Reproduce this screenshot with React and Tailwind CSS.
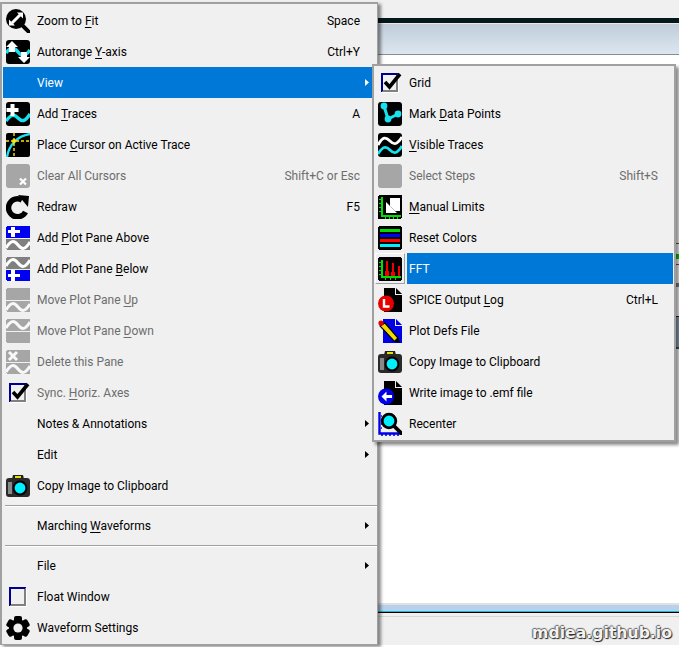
import React from "react";

const ui = { fontFamily: 'Roboto, "Open Sans", sans-serif' };

// Shared pieces for the toolbar-style icons
const Ico = ({ children }) => (
  <svg viewBox="0 0 24 24" width="24" height="24" shapeRendering="crispEdges">
    {children}
  </svg>
);
const Smooth = ({ children }) => (
  <svg viewBox="0 0 24 24" width="24" height="24">
    {children}
  </svg>
);
const Wave = ({ y = 12, color = "#fff", w = 3 }) => (
  <path d={`M0 ${y + 3}C5 ${y - 5} 8 ${y - 5} 12 ${y}S19 ${y + 5} 24 ${y - 3}`} fill="none" stroke={color} strokeWidth={w} />
);
const TOP = "M1 0h22l1 1v11H0V1z";
const BOTTOM = "M0 13h24v10l-1 1H1l-1-1z";

const ZoomFit = () => (
  <Smooth>
    <path d="M15 15l8 8" stroke="#000" strokeWidth="4" strokeLinecap="round" />
    <circle cx="10" cy="10" r="10" fill="#000" />
    <path d="M11 3.5h6v6zM9 16.500H3v-6z" fill="#fff" />
    <path d="M6 14l8-8" stroke="#fff" strokeWidth="3" />
  </Smooth>
);
const Autorange = () => (
  <Smooth>
    <rect width="24" height="24" rx="3" fill="#000" />
    <path d="M0 13C5 6 8 7 12 12S19 17 24 10" fill="none" stroke="#19e0ee" strokeWidth="3.4" />
    <path d="M6 1l6 6H9v5H3V7H0zM18 23l6-6h-3v-5h-6v5h-3z" fill="#fff" />
  </Smooth>
);
const AddTraces = () => (
  <Smooth>
    <rect width="24" height="24" rx="3" fill="#000" />
    <path d="M0 19C5 12 8 12 12 16S19 20 24 12" fill="none" stroke="#19e0ee" strokeWidth="3.4" />
    <path d="M4.500 2h4v4h4v4h-4v4h-4v-4h-4V6h4z" fill="#fff" />
  </Smooth>
);
const PlaceCursor = () => (
  <Smooth>
    <rect width="24" height="24" rx="2" fill="#000" />
    <path d="M1 24C3 12 11 3 24 1" fill="none" stroke="#19e0ee" strokeWidth="2.4" />
    <path d="M8 0v24M0 8h24" stroke="#ffe400" strokeWidth="1.4" strokeDasharray="3 2" />
    <circle cx="8" cy="8" r="2" fill="#ffe400" />
  </Smooth>
);
const ClearCursors = () => (
  <Smooth>
    <rect width="24" height="24" rx="3" fill="#a6a6a6" />
    <path d="M14 14.5l6 6M20 14.5l-6 6" stroke="#fff" strokeWidth="2.2" />
  </Smooth>
);
const Redraw = () => (
  <Smooth>
    <path d="M19.500 17A9 9 0 1 1 16 5" fill="none" stroke="#000" strokeWidth="5.500" />
    <path d="M12 0l11 1-1 11z" fill="#000" />
  </Smooth>
);
const PaneAbove = () => (
  <Ico>
    <path d={TOP} fill="#0000f0" />
    <path d="M5 1h4v3h5v3H9v4H5V7H2V4h3z" fill="#fff" />
    <path d={BOTTOM} fill="#808080" />
    <g shapeRendering="auto"><Wave y={19} /></g>
  </Ico>
);
const PaneBelow = () => (
  <Ico>
    <path d={TOP} fill="#808080" />
    <g shapeRendering="auto"><Wave y={6} /></g>
    <path d={BOTTOM} fill="#0000f0" />
    <path d="M5 13h4v4h5v3H9v4H5v-4H2v-3h3z" fill="#fff" />
  </Ico>
);
const MoveUp = () => (
  <Ico>
    <path d={TOP} fill="#a6a6a6" />
    <path d={BOTTOM} fill="#a6a6a6" />
    <g shapeRendering="auto"><Wave y={19} color="#f8f8f8" /></g>
  </Ico>
);
const MoveDown = () => (
  <Ico>
    <path d={TOP} fill="#a6a6a6" />
    <g shapeRendering="auto"><Wave y={6} color="#f8f8f8" /></g>
    <path d={BOTTOM} fill="#a6a6a6" />
  </Ico>
);
const DeletePane = () => (
  <Ico>
    <path d={TOP} fill="#a6a6a6" />
    <g shapeRendering="auto"><path d="M3 2l8 8M11 2l-8 8" stroke="#f8f8f8" strokeWidth="3" /></g>
    <path d={BOTTOM} fill="#a6a6a6" />
    <g shapeRendering="auto"><Wave y={19} color="#f8f8f8" /></g>
  </Ico>
);
const CheckBox = ({ checked }) => (
  <Ico>
    <rect x="3" y="3" width="17" height="18" fill="#f0f0f0" />
    <path d="M3 2h17v2H5v15l-2 2z" fill="#000090" />
    <path d="M3 21l2-2h13V4l2-2v19z" fill="#808080" />
    <rect x="3" y="21" width="18" height="1" fill="#fff" />
    <rect x="20" y="3" width="1" height="19" fill="#fff" />
    {checked && (
      <g shapeRendering="auto">
        <path d="M7 11l4.500 5L22 3" fill="none" stroke="#000" strokeWidth="3.6" />
      </g>
    )}
  </Ico>
);
const Camera = () => (
  <Smooth>
    <path d="M7 1h10l1 4H6z" fill="#222" />
    <rect x="9" y="2" width="6" height="2" fill="#e8e000" />
    <rect y="4" width="24" height="19" rx="3" fill="#2a2a2a" />
    <path d="M2 8h4v12H2z" fill="#888" />
    <circle cx="14" cy="14" r="7.4" fill="#000" />
    <circle cx="14" cy="14" r="5.4" fill="#00f0ff" />
  </Smooth>
);
const Gear = () => (
  <Smooth>
    <g fill="#000">
      <circle cx="12" cy="12" r="9" />
      <rect x="8" y="0" width="8" height="24" rx="2" />
      <rect x="8" y="0" width="8" height="24" rx="2" transform="rotate(60 12 12)" />
      <rect x="8" y="0" width="8" height="24" rx="2" transform="rotate(120 12 12)" />
    </g>
    <circle cx="12" cy="12" r="4.6" fill="#f0f0f0" />
  </Smooth>
);
const MarkData = () => (
  <Smooth>
    <rect width="24" height="24" rx="3" fill="#000" />
    <path d="M6 4l4 13 10-5" fill="none" stroke="#19e0ee" strokeWidth="3" />
    <circle cx="6" cy="4" r="3.400" fill="#19e0ee" />
    <circle cx="10" cy="17" r="3.400" fill="#19e0ee" />
    <circle cx="20" cy="12" r="3.400" fill="#19e0ee" />
  </Smooth>
);
const VisibleTraces = () => (
  <Smooth>
    <rect width="24" height="24" rx="3" fill="#000" />
    <path d="M0 12C5 3 8 4 12 8S19 12 24 4" fill="none" stroke="#fff" strokeWidth="2.8" />
    <path d="M0 21C5 13 8 13 12 17S19 21 24 13" fill="none" stroke="#19e0ee" strokeWidth="2.8" />
  </Smooth>
);
const SelectSteps = () => (
  <Smooth>
    <rect width="24" height="24" rx="3" fill="#a6a6a6" />
  </Smooth>
);
const ManualLimits = () => (
  <Ico>
    <rect width="24" height="24" rx="2" fill="#000" />
    <path d="M3 2h2v18h18v2H3z" fill="#00e000" />
    <path d="M1 4h2v1H1zM1 8h2v1H1zM1 12h2v1H1zM1 16h2v1H1zM7 22h1v2H7zM11 22h1v2h-1zM15 22h1v2h-1zM19 22h1v2h-1z" fill="#00e000" />
    <g shapeRendering="auto">
      <path d="M12 3h10v13h-5l-5-5z" fill="#fff" />
      <path d="M8 7v11h11z" fill="#fff" />
    </g>
  </Ico>
);
const ResetColors = () => (
  <Ico>
    <rect width="24" height="24" rx="3" fill="#000" />
    <rect x="2" y="3" width="20" height="3" fill="#00e000" />
    <rect x="2" y="8" width="20" height="3" fill="#0000ff" />
    <rect x="2" y="13" width="20" height="3" fill="#ff0000" />
    <rect x="2" y="18" width="20" height="3" fill="#00f0ff" />
  </Ico>
);
const Fft = () => (
  <Ico>
    <rect width="24" height="24" rx="3" fill="#000" />
    <path d="M3 3h2v16h18v2H3zM1 5h2v1H1zM1 9h2v1H1zM1 13h2v1H1zM1 17h2v1H1zM7 21h1v2H7zM12 21h1v2h-1zM17 21h1v2h-1z" fill="#00e000" />
    <path d="M8 4h2v15H8zM14 6h2v13h-2zM20 9h2v10h-2zM7 14h4v5H7zM13 15h4v4h-4z" fill="#f00000" />
  </Ico>
);
const Doc = ({ color }) => <path d="M6 0h11v7h7v17H6z" fill={color} />;
const Fold = ({ color }) => <path d="M18 0l6 6h-6z" fill={color} />;
const SpiceLog = () => (
  <Smooth>
    <Doc color="#000" />
    <Fold color="#000" />
    <circle cx="8" cy="15.500" r="8" fill="#e80000" />
    <path d="M6 11v7.500H11.500" fill="none" stroke="#fff" strokeWidth="2.4" />
  </Smooth>
);
const PlotDefs = () => (
  <Smooth>
    <path d="M5 0h12v7h7v17H5z" fill="#0000e8" />
    <Fold color="#0000e8" />
    <path d="M2 7l5-3 13 15 1 4-5-1z" fill="#f0d800" stroke="#000" strokeWidth="1.2" />
    <circle cx="3" cy="4" r="2.600" fill="#e80000" />
    <path d="M16 22l5 1-1-5z" fill="#000" />
  </Smooth>
);
const WriteEmf = () => (
  <Smooth>
    <Doc color="#000" />
    <Fold color="#000" />
    <circle cx="8" cy="15.500" r="8" fill="#0000e8" />
    <path d="M8.500 10.500l-5 5 5 5zM8.500 14H14v3H8.500z" fill="#fff" />
  </Smooth>
);
const Recenter = () => (
  <Smooth>
    <path d="M1.500 0v21.500H24" fill="none" stroke="#0000e8" strokeWidth="2.400" />
    <path d="M4 24v-2M8 24v-2M12 24v-2M16 24v-2M20 24v-2M3 4h1M3 8h1M3 12h1M3 16h1" stroke="#0000e8" strokeWidth="1.600" />
    <path d="M16 14l7 7" stroke="#000" strokeWidth="3.800" strokeLinecap="round" />
    <circle cx="11" cy="9" r="6.800" fill="#00f0ff" stroke="#000" strokeWidth="2.800" />
  </Smooth>
);

const mainItems = [
  { icon: ZoomFit, text: ["Zoom to ", "F", "it"], key: "Space" },
  { icon: Autorange, text: ["Autorange ", "Y", "-axis"], key: "Ctrl+Y" },
  { text: ["View"], sub: true, active: true },
  { icon: AddTraces, text: ["Add ", "T", "races"], key: "A" },
  { icon: PlaceCursor, text: ["Place ", "C", "ursor on Active Trace"] },
  { icon: ClearCursors, text: ["Clear All Cursors"], key: "Shift+C or Esc", off: true },
  { icon: Redraw, text: ["Redraw"], key: "F5" },
  { icon: PaneAbove, text: ["Add ", "P", "lot Pane Above"] },
  { icon: PaneBelow, text: ["Add Plot Pane ", "B", "elow"] },
  { icon: MoveUp, text: ["Move Plot Pane ", "U", "p"], off: true },
  { icon: MoveDown, text: ["Move Plot Pane ", "D", "own"], off: true },
  { icon: DeletePane, text: ["Delete this Pane"], off: true },
  { icon: () => <CheckBox checked />, text: ["Sync. ", "H", "oriz. Axes"], off: true },
  { text: ["Notes & Annotations"], sub: true },
  { text: ["Edit"], sub: true },
  { icon: Camera, text: ["Copy Image to Clipboard"] },
  { sep: true },
  { text: ["Marching ", "W", "aveforms"], sub: true },
  { sep: true },
  { text: ["File"], sub: true },
  { icon: () => <CheckBox />, text: ["Float Window"] },
  { icon: Gear, text: ["Waveform Settings"] },
];

const viewItems = [
  { icon: () => <CheckBox checked />, text: ["Grid"] },
  { icon: MarkData, text: ["Mark ", "D", "ata Points"] },
  { icon: VisibleTraces, text: ["", "V", "isible Traces"] },
  { icon: SelectSteps, text: ["Select Steps"], key: "Shift+S", off: true },
  { icon: ManualLimits, text: ["", "M", "anual Limits"] },
  { icon: ResetColors, text: ["Reset Colors"] },
  { icon: Fft, text: ["FFT"], active: true, framed: true },
  { icon: SpiceLog, text: ["SPICE Output ", "L", "og"], key: "Ctrl+L" },
  { icon: PlotDefs, text: ["Plot Defs File"] },
  { icon: Camera, text: ["Copy Image to Clipboard"] },
  { icon: WriteEmf, text: ["Write image to .emf file"] },
  { icon: Recenter, text: ["Recenter"] },
];

const Label = ({ text }) => (
  <span className="whitespace-pre">
    {text[0]}
    {text[1] && <u className="underline-offset-2">{text[1]}</u>}
    {text[2]}
  </span>
);

const MainRow = ({ item }) => {
  if (item.sep) {
    return (
      <div className="h-[9px] flex flex-col justify-center pl-[2px]">
        <div className="h-[1px] bg-[#a0a0a0]" />
        <div className="h-[1px] bg-white" />
      </div>
    );
  }
  const Icon = item.icon;
  return (
    <div className={`h-[31px] flex items-center ${item.active ? "bg-[#0078d7] text-white" : item.off ? "text-[#6d6d6d]" : "text-black"}`}>
      <div className="w-[30px] flex justify-center shrink-0">{Icon && <Icon />}</div>
      <div className="pl-[4px] flex-1">
        <Label text={item.text} />
      </div>
      <div className="pr-[5px]">{item.key}</div>
      <div className={`w-[4px] h-[7px] mr-[8px] ${item.sub ? (item.active ? "bg-white" : "bg-black") : ""} [clip-path:polygon(0_0,100%_50%,0_100%)]`} />
    </div>
  );
};

const ViewRow = ({ item }) => {
  const Icon = item.icon;
  return (
    <div className={`h-[31px] flex items-center ${item.off ? "text-[#6d6d6d]" : "text-black"}`}>
      <div className={`w-[30px] h-[31px] flex items-center justify-center shrink-0 ${item.framed ? "border border-t-white border-l-white border-r-[#a0a0a0] border-b-[#a0a0a0]" : ""}`}>
        <Icon />
      </div>
      <div className={`h-[31px] flex items-center flex-1 ml-[2px] ${item.active ? "bg-[#0078d7] text-white" : ""}`}>
        <div className="pl-[2px] flex-1">
          <Label text={item.text} />
        </div>
        <div className="pr-[15px]">{item.key}</div>
      </div>
    </div>
  );
};

export default function App() {
  return (
    <div className="relative w-[679px] h-[647px] overflow-hidden bg-white text-[12px] leading-none" style={ui}>
      {/* window behind the menus */}
      <div className="h-[645px] flex flex-col">
        <div className="h-[18px] bg-[#f0f0f0]" />
        <div className="h-[5px] bg-[#04181c]" />
        <div className="h-[1px] bg-[#e8e8e8]" />
        <div className="h-[30px] bg-gradient-to-b from-[#bfcdd9] to-[#dce6f0]" />
        <div className="h-[1px] bg-[#8c8c8c]" />
        <div className="flex-1 bg-white" />
        <div className="h-[2px] bg-[#e0e0e0]" />
        <div className="h-[6px] bg-[#b8d0ea]" />
        <div className="h-[1px] bg-[#19b8d8]" />
        <div className="h-[1px] bg-black" />
        <div className="h-[3px] bg-[#f0f0f0]" />
        <div className="h-[1px] bg-[#d8d8d8]" />
        <div className="h-[28px] bg-[#f0f0f0] flex items-center justify-end pr-[7px] pt-[3px]">
          <span
            className="text-[15.7px] font-bold text-[#f2f2f2] [text-shadow:1px_1px_1px_#222,-1px_0_1px_#666,0_-1px_1px_#666]"
            style={{ fontFamily: '"DejaVu Sans", sans-serif' }}
          >
            mdiea.github.io
          </span>
        </div>
      </div>

      {/* bits of the plot peeking out right of the submenu */}
      <div className="absolute left-[676px] top-[243px] w-[3px] h-[1px] bg-[#8a4a4a]" />
      <div className="absolute left-[676px] top-[254px] w-[3px] h-[5px] bg-[#00d000]" />
      <div className="absolute left-[676px] top-[264px] w-[3px] h-[1px] bg-[#a04040]" />
      <div className="absolute left-[676px] top-[283px] w-[3px] h-[4px] bg-[#808080]" />
      <div className="absolute left-[676px] top-[316px] w-[3px] h-[1px] bg-[#202020]" />
      <div className="absolute left-[676px] top-[317px] w-[3px] h-[30px] bg-[#8aa0b8]" />
      <div className="absolute left-[676px] top-[347px] w-[3px] h-[2px] bg-[#505050]" />

      {/* main context menu */}
      <div className="absolute left-0 top-[2px] w-[378px] h-[643px] bg-[#f0f0f0] border border-l-2 border-t-2 border-[#a0a0a0] pt-[1px] pl-[1px] shadow-[3px_2px_3px_rgba(0,0,0,0.45)]">
        {mainItems.map((item, i) => (
          <MainRow key={i} item={item} />
        ))}
      </div>

      {/* View submenu */}
      <div className="absolute left-[372px] top-[64px] w-[304px] h-[378px] bg-[#f0f0f0] border-2 border-[#a0a0a0] pt-[1px] pl-[1px] pr-[1px] shadow-[3px_3px_3px_rgba(0,0,0,0.45)]">
        {viewItems.map((item, i) => (
          <ViewRow key={i} item={item} />
        ))}
      </div>
    </div>
  );
}
